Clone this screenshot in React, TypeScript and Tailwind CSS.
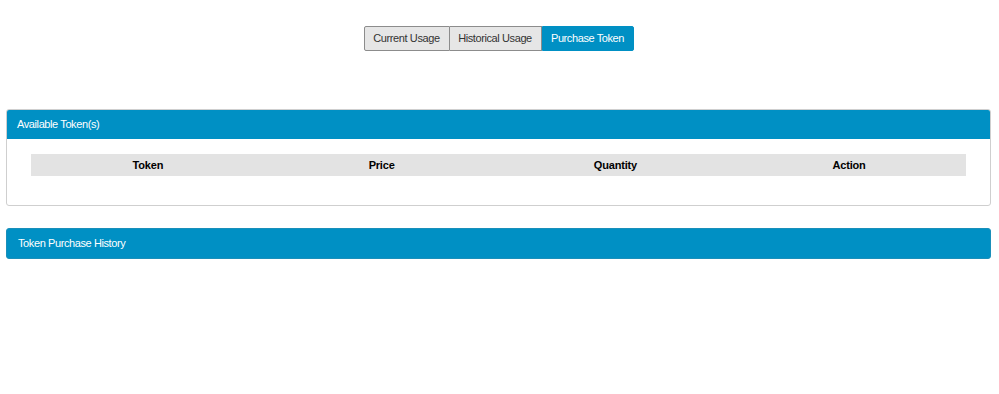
export default function App() {
  return (
    <div className="w-[997px] h-[394px] bg-white text-[11px] text-[#333]" style={{ fontFamily: '"Liberation Sans", Arial, sans-serif' }}>
      <div className="flex justify-center pt-[26px]">
        <div className="flex tracking-[-0.4px]">
          <button className="w-[86px] h-[25px] bg-[#e6e6e6] border border-[#8c8c8c] rounded-l-[2px] text-[#333]">Current Usage</button>
          <button className="w-[92px] h-[25px] bg-[#e6e6e6] border border-[#8c8c8c] border-l-0 text-[#333]">Historical Usage</button>
          <button className="w-[92px] h-[25px] bg-[#0090c4] border border-[#0090c4] rounded-r-[2px] text-white">Purchase Token</button>
        </div>
      </div>
      <div className="mx-[6px] mt-[58px] border border-[#cfcfcf] rounded-[3px]">
        <div className="h-[29px] bg-[#0090c4] text-white flex items-center pl-[10px] rounded-t-[2px] tracking-[-0.4px]">Available Token(s)</div>
        <div className="pt-[15px] pb-[29px] px-[24px]">
          <div className="grid grid-cols-4 h-[22px] items-center bg-[#e3e3e3] font-bold text-black text-center tracking-[-0.2px]">
            <div>Token</div>
            <div>Price</div>
            <div>Quantity</div>
            <div>Action</div>
          </div>
        </div>
      </div>
      <div className="mx-[6px] mt-[22px] h-[31px] bg-[#0090c4] text-white flex items-center pl-[11px] rounded-[3px] border border-[#1a8fba] tracking-[-0.4px]">Token Purchase History</div>
    </div>
  );
}
